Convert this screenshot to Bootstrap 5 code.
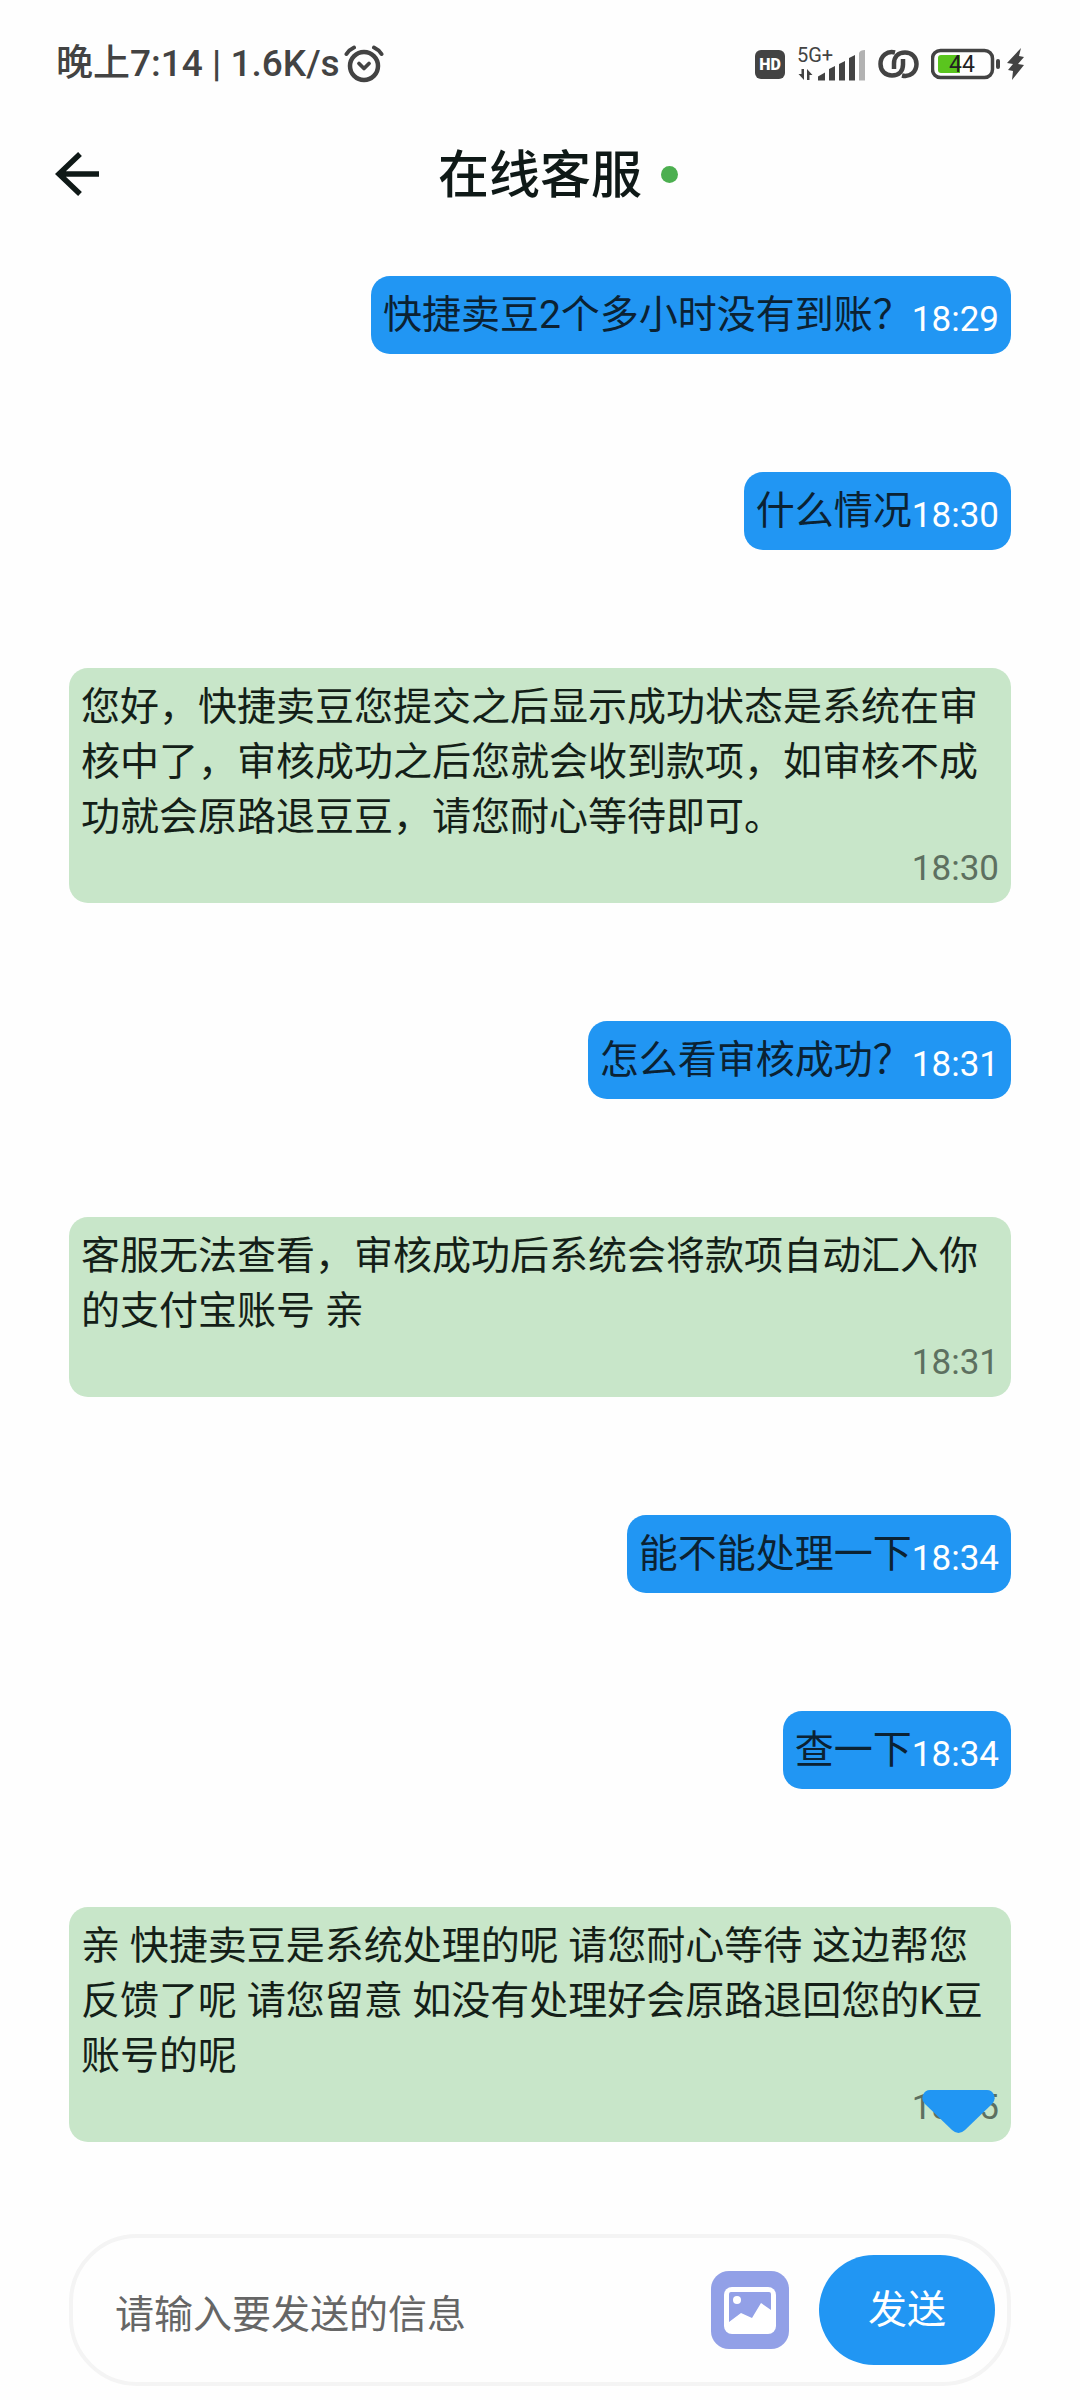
<!DOCTYPE html>
<html lang="zh-CN">
<head>
<meta charset="utf-8">
<meta name="viewport" content="width=device-width, initial-scale=1">
<title>在线客服</title>
<link rel="stylesheet" href="https://cdn.jsdelivr.net/npm/bootstrap@5.3.0/dist/css/bootstrap.min.css">
<style>
  body { background: #fefefe; color: #0f1917; font-family: Roboto, "Noto Sans CJK SC", sans-serif; font-size: 39px; line-height: 55px; }
  svg { display: block; flex: none; }
  .status-bar { height: 120px; padding: 7px 55px 0 56px; color: #434343; font-size: 37px; }
  .status-icons { gap: 12px; }
  .top-bar { height: 108px; padding: 0 53px; }
  .top-bar h1 { font-size: 51px; line-height: 64px; padding-top: 3px; }
  .side { flex: 1 1 0; }
  .back-link { color: #0f1917; }
  .online-dot { width: 17px; height: 17px; margin-left: 19px; background: #4caf50; }
  .chat-list { gap: 118px; padding: 48px 69px 0; }
  .bubble { border-radius: 19px; padding: 12px 12px 11px; }
  .bubble time { font-size: 35px; line-height: 47px; }
  .bubble-out { background: #2196f3; color: #0b2233; }
  .bubble-out time { color: #fff; }
  .bubble-in { background: #c8e6c9; color: #141f18; }
  .bubble-in time { color: #5d7060; }
  .scroll-down { right: 16px; bottom: 8px; }
  .composer { margin: 92px 69px 14px; height: 152px; border: 4px solid #f4f4f4; border-radius: 68px; padding: 0 12px 0 42px; }
  .composer input { font-size: 39px; line-height: 55px; padding-top: 10px; min-width: 0; outline: 0; color: #0f1917; }
  .composer input::placeholder { color: #666; opacity: 1; }
  .send-btn, .send-btn:hover { width: 176px; height: 110px; margin-left: 30px; background: #2196f3; color: #fff; font-size: 39px; }
</style>
</head>
<body>
<div class="d-flex justify-content-between align-items-center status-bar fw-medium">
  <div class="d-flex align-items-center">
    <span>晚上7:14 | 1.6K/s</span>
    <svg class="ms-1" width="40" height="38" viewBox="0 0 40 38" fill="none" stroke="#434343" stroke-linecap="round" aria-label="闹钟">
      <circle cx="20" cy="21" r="14" stroke-width="4.5"/>
      <path d="M2.5 9Q5.500 4.500 10 2.500M30 2.500Q34.500 4.500 37.500 9" stroke-width="4"/>
      <path d="M15 18.500l5 5 5-5" stroke-width="3.800" stroke-linejoin="round"/>
    </svg>
  </div>
  <div class="d-flex align-items-center status-icons">
    <svg width="30" height="30" viewBox="0 0 30 30" aria-label="HD"><rect width="30" height="29" y="1" rx="6" fill="#434343"/><text x="15" y="21" font-size="16" font-weight="900" fill="#fff" text-anchor="middle">HD</text></svg>
    <svg width="69" height="40" viewBox="0 -3 69 40" fill="#434343" aria-label="5G+">
      <text x="0" y="15" font-size="20" font-weight="400">5G+</text>
      <path d="M7 22v11L1.500 27H4.500V22zM10 33V22l5.500 6H12.500v5z"/>
      <path d="M21 33.500v-4l7-4v8zM32 33.500V22l6-3v14.500zM42 33.500V17l6-3v19.500zM52 33.500V11l6-3v25.500z"/>
      <path d="M62 33.500V6q1-3 6-3v30.500z" fill="#b2b2b2"/>
    </svg>
    <svg width="41" height="30" viewBox="0 0 41 30" fill="none" stroke="#434343" stroke-width="4.500" aria-label="连接">
      <path d="M17 3.500C9 1.500 2.500 7 2.500 15c0 7 5 11.500 11.500 11.500 7 0 11-4.500 11-11V10"/>
      <path d="M24 26.500c8 2 14.500-3.500 14.500-11.500 0-7-5-11.500-11.500-11.500-7 0-11 4.500-11 11V20"/>
    </svg>
    <svg width="94" height="32" viewBox="0 0 94 32" aria-label="电量 44">
      <rect x="1.500" y="2.500" width="60" height="27" rx="8" fill="none" stroke="#434343" stroke-width="3.500"/>
      <path d="M10 7h19v18H10q-3 0-3-3V10q0-3 3-3z" fill="#5ac51e"/>
      <rect x="65" y="11" width="4" height="10" rx="2" fill="#434343"/>
      <text x="31" y="24" font-size="23" font-weight="400" fill="#222" text-anchor="middle">44</text>
      <path d="M90 0L76 15l6 1-5 6 5 1-1 9 12-15-6-1 6-7-5-1z" fill="#434343"/>
    </svg>
  </div>
</div>

<header class="d-flex align-items-center top-bar">
  <div class="side d-flex">
    <a href="#" class="back-link" aria-label="返回">
      <svg width="48" height="46" viewBox="0 0 48 46" fill="none" stroke="currentColor" stroke-width="5.500"><path d="M27 3L6 23l21 20M6 23h40"/></svg>
    </a>
  </div>
  <h1 class="m-0 fw-medium">在线客服</h1>
  <div class="side"><div class="online-dot rounded-circle"></div></div>
</header>

<main class="d-flex flex-column chat-list">
  <div class="d-flex align-items-end align-self-end bubble bubble-out"><span>快捷卖豆2个多小时没有到账？</span><time>18:29</time></div>
  <div class="d-flex align-items-end align-self-end bubble bubble-out"><span>什么情况</span><time>18:30</time></div>
  <div class="bubble bubble-in"><p class="m-0">您好，快捷卖豆您提交之后显示成功状态是系统在审核中了，审核成功之后您就会收到款项，如审核不成功就会原路退豆豆，请您耐心等待即可。</p><time class="d-block text-end">18:30</time></div>
  <div class="d-flex align-items-end align-self-end bubble bubble-out"><span>怎么看审核成功？</span><time>18:31</time></div>
  <div class="bubble bubble-in"><p class="m-0">客服无法查看，审核成功后系统会将款项自动汇入你的支付宝账号 亲</p><time class="d-block text-end">18:31</time></div>
  <div class="d-flex align-items-end align-self-end bubble bubble-out"><span>能不能处理一下</span><time>18:34</time></div>
  <div class="d-flex align-items-end align-self-end bubble bubble-out"><span>查一下</span><time>18:34</time></div>
  <div class="bubble bubble-in position-relative"><p class="m-0">亲 快捷卖豆是系统处理的呢 请您耐心等待 这边帮您反馈了呢 请您留意 如没有处理好会原路退回您的K豆账号的呢</p><time class="d-block text-end">18:35</time>
    <button type="button" class="position-absolute scroll-down border-0 bg-transparent p-0" aria-label="滚动到底部">
      <svg width="73" height="45" viewBox="0 0 73 45"><path d="M8 1H65Q70 1 72 6T70 15L43 41Q36.500 47 30 41L3 15Q-1 11 1 6T8 1z" fill="#2196f3"/></svg>
    </button>
  </div>
</main>

<form class="d-flex align-items-center composer" onsubmit="return false">
  <input type="text" class="flex-grow-1 border-0 bg-transparent px-0 pb-0" placeholder="请输入要发送的信息" aria-label="请输入要发送的信息">
  <button type="button" class="border-0 bg-transparent p-0" aria-label="发送图片">
    <svg width="78" height="78" viewBox="0 0 78 78">
      <rect width="78" height="78" rx="18" fill="#92a0e7"/>
      <rect x="13" y="16" width="52" height="47" rx="8" fill="#fff"/>
      <path d="M20 21H58Q60 21 60 23V39L50 32 41 47 30 42 18 51V23Q18 21 20 21z" fill="#92a0e7"/>
      <circle cx="26" cy="29" r="4" fill="#fff"/>
    </svg>
  </button>
  <button type="submit" class="btn rounded-pill border-0 p-0 send-btn">发送</button>
</form>
<script src="https://cdn.jsdelivr.net/npm/bootstrap@5.3.0/dist/js/bootstrap.bundle.min.js"></script>
</body>
</html>
